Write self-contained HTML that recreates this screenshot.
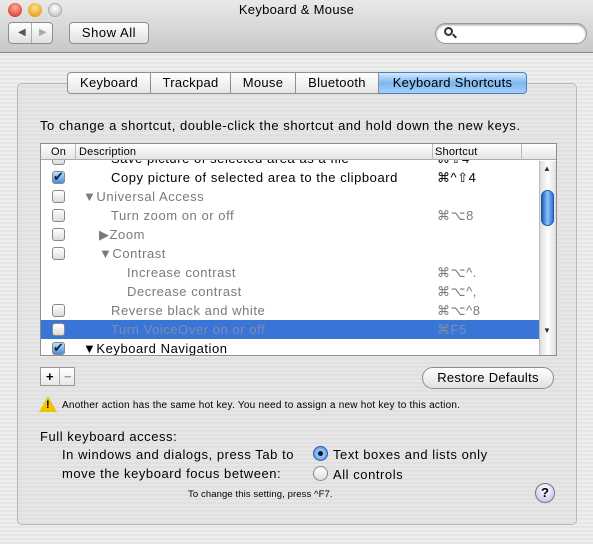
<!DOCTYPE html><html><head><style>
*{box-sizing:border-box;margin:0;padding:0}
body{width:593px;height:544px;overflow:hidden;font-family:"Liberation Sans",sans-serif;font-size:13px;letter-spacing:0.55px;color:#000;position:relative;background:repeating-linear-gradient(#ededed 0 2px,#e6e6e6 2px 4px)}
.a{position:absolute;white-space:nowrap}
#tb{left:0;top:0;width:593px;height:53px;background:linear-gradient(#e9e9e9,#c8c8c8);border-bottom:1px solid #8a8a8a}
.light{width:14px;height:14px;border-radius:50%;top:3px}
.btn{background:linear-gradient(#fff,#e0e0e0);border:1px solid #8d8d8d;border-radius:4px}
#grp{left:17px;top:83px;width:560px;height:442px;border:1px solid #b9b9b9;border-radius:5px;background:repeating-linear-gradient(#e6e6e6 0 2px,#e0e0e0 2px 4px)}
.tab{top:72px;height:22px;border:1px solid #8e8e8e;border-left:none;background:linear-gradient(#fff,#e6e6e6);text-align:center;line-height:20px;letter-spacing:0.3px}
#tbl{left:40px;top:143px;width:517px;height:213px;border:1px solid #8f8f8f;background:#fff;overflow:hidden}
.row{position:absolute;left:0;width:498px;height:19px;line-height:19px}
.cb{position:absolute;left:11px;top:3px;width:13px;height:13px;border:1px solid #888;border-radius:3px;background:linear-gradient(#fff,#ddd)}
.ck::after{content:"✔";position:absolute;left:0;top:-5px;font-size:13px;color:#123}
.ck{background:linear-gradient(#bfe0ff,#4a8ad9)}
.g{color:#7a7a7a}
.sc{position:absolute;left:396px}
</style></head><body>
<div class="a" id="tb"></div>
<div class="a light" style="left:8px;background:radial-gradient(circle at 50% 35%,#ffb0a0,#d02010)"></div>
<div class="a light" style="left:28px;background:radial-gradient(circle at 50% 35%,#ffe090,#e08a00)"></div>
<div class="a light" style="left:48px;background:radial-gradient(circle at 50% 35%,#fff,#bbb);border:1px solid #aaa"></div>
<div class="a" style="left:0;width:593px;top:2px;text-align:center;font-size:13px;letter-spacing:0.3px">Keyboard &amp; Mouse</div>
<div class="a btn" style="left:8px;top:22px;width:45px;height:22px;font-size:10px;color:#555;line-height:20px"><span style="position:absolute;left:9px">◀</span><span style="position:absolute;left:22px;top:0;width:1px;height:20px;background:#aaa"></span><span style="position:absolute;left:30px;color:#aaa">▶</span></div>
<div class="a btn" style="left:69px;top:22px;width:80px;height:22px;text-align:center;line-height:20px">Show All</div>
<div class="a" style="left:435px;top:23px;width:152px;height:21px;border:1px solid #999;border-radius:11px;background:#fff;box-shadow:inset 0 1px 2px #999"></div>
<div class="a" style="left:444px;top:27px;width:9px;height:9px;border:2px solid #333;border-radius:50%"></div>
<div class="a" style="left:452px;top:35px;width:5px;height:2px;background:#333;transform:rotate(45deg)"></div>
<div class="a" id="grp"></div>
<div class="a tab" style="left:67px;width:84px;border-left:1px solid #8e8e8e;border-radius:4px 0 0 4px">Keyboard</div>
<div class="a tab" style="left:151px;width:80px">Trackpad</div>
<div class="a tab" style="left:231px;width:65px">Mouse</div>
<div class="a tab" style="left:296px;width:83px">Bluetooth</div>
<div class="a tab" style="left:379px;width:148px;border-radius:0 4px 4px 0;background:linear-gradient(#d4ebff,#7cb6f0 50%,#a6d0fb);border-color:#4d7fb5">Keyboard Shortcuts</div>
<div class="a" style="left:40px;top:118px">To change a shortcut, double-click the shortcut and hold down the new keys.</div>
<div class="a" id="tbl">
<div class="a" style="left:0;top:0;width:515px;height:16px;background:linear-gradient(#fff,#e4e4e4);border-bottom:1px solid #aaa;font-size:11px;line-height:16px;letter-spacing:0.2px">
<span class="a" style="left:10px">On</span><span class="a" style="left:34px;top:0;width:1px;height:16px;background:#bbb"></span><span class="a" style="left:38px">Description</span><span class="a" style="left:391px;top:0;width:1px;height:16px;background:#bbb"></span><span class="a" style="left:394px">Shortcut</span><span class="a" style="left:480px;top:0;width:1px;height:16px;background:#bbb"></span></div>
<div class="row" style="top:5px;clip-path:inset(11px 0 0 0)"><span class="cb"></span><span class="a" style="left:70px">Save picture of selected area as a file</span><span class="sc">⌘⇧4</span></div>
<div class="row" style="top:24px"><span class="cb ck"></span><span class="a" style="left:70px">Copy picture of selected area to the clipboard</span><span class="sc">⌘^⇧4</span></div>
<div class="row g" style="top:43px"><span class="cb"></span><span class="a" style="left:42px">▼Universal Access</span></div>
<div class="row g" style="top:62px"><span class="cb"></span><span class="a" style="left:70px">Turn zoom on or off</span><span class="sc">⌘⌥8</span></div>
<div class="row g" style="top:81px"><span class="cb"></span><span class="a" style="left:58px">▶Zoom</span></div>
<div class="row g" style="top:100px"><span class="cb"></span><span class="a" style="left:58px">▼Contrast</span></div>
<div class="row g" style="top:119px"><span class="a" style="left:86px">Increase contrast</span><span class="sc">⌘⌥^.</span></div>
<div class="row g" style="top:138px"><span class="a" style="left:86px">Decrease contrast</span><span class="sc">⌘⌥^,</span></div>
<div class="row g" style="top:157px"><span class="cb"></span><span class="a" style="left:70px">Reverse black and white</span><span class="sc">⌘⌥^8</span></div>
<div class="row g" style="top:176px;background:#3875d7;color:#7f8fa8"><span class="cb"></span><span class="a" style="left:70px">Turn VoiceOver on or off</span><span class="sc">⌘F5</span></div>
<div class="row" style="top:195px"><span class="cb ck"></span><span class="a" style="left:42px">▼Keyboard Navigation</span></div>
<div class="a" style="left:498px;top:17px;width:17px;height:195px;background:linear-gradient(90deg,#ddd,#fff 50%,#ddd);border-left:1px solid #bbb"></div>
<div class="a" style="left:502px;top:20px;font-size:8px;color:#333">▲</div>
<div class="a" style="left:502px;top:182px;font-size:8px;color:#333">▼</div>
<div class="a" style="left:500px;top:46px;width:13px;height:36px;border-radius:7px;background:linear-gradient(90deg,#1c5fbf,#8cc3ff 50%,#2f73cf);border:1px solid #2a56a0"></div>
</div>
<div class="a" style="left:40px;top:367px;width:35px;height:19px;border:1px solid #999;background:linear-gradient(#fff,#e8e8e8);font-weight:bold;line-height:17px"><span class="a" style="left:5px">+</span><span class="a" style="left:18px;top:0;width:1px;height:17px;background:#aaa"></span><span class="a" style="left:23px;color:#999">−</span></div>
<div class="a btn" style="left:422px;top:367px;width:132px;height:22px;border-radius:11px;text-align:center;line-height:20px;letter-spacing:0.3px">Restore Defaults</div>
<div class="a" style="left:39px;top:396px;width:0;height:0;border-left:9px solid transparent;border-right:9px solid transparent;border-bottom:16px solid #f2c500"></div>
<div class="a" style="left:46px;top:399px;font-size:11px;font-weight:bold">!</div>
<div class="a" style="left:62px;top:400px;font-size:10px;letter-spacing:0.24px">Another action has the same hot key. You need to assign a new hot key to this action.</div>
<div class="a" style="left:40px;top:429px">Full keyboard access:</div>
<div class="a" style="left:62px;top:447px">In windows and dialogs, press Tab to</div>
<div class="a" style="left:62px;top:466px">move the keyboard focus between:</div>
<div class="a" style="left:313px;top:446px;width:15px;height:15px;border-radius:50%;background:radial-gradient(circle,#111 0 2px,#9ccaff 3px,#3b7fd6);border:1px solid #2c5ea8"></div>
<div class="a" style="left:333px;top:447px">Text boxes and lists only</div>
<div class="a" style="left:313px;top:466px;width:15px;height:15px;border-radius:50%;background:linear-gradient(#fff,#ddd);border:1px solid #888"></div>
<div class="a" style="left:333px;top:467px">All controls</div>
<div class="a" style="left:188px;top:489px;font-size:9.5px;letter-spacing:0.1px">To change this setting, press ^F7.</div>
<div class="a" style="left:535px;top:483px;width:20px;height:20px;border-radius:50%;background:radial-gradient(circle at 50% 30%,#fff,#c9b2f0);border:1px solid #777;text-align:center;font-weight:bold;line-height:18px;letter-spacing:0">?</div>
</body></html>
